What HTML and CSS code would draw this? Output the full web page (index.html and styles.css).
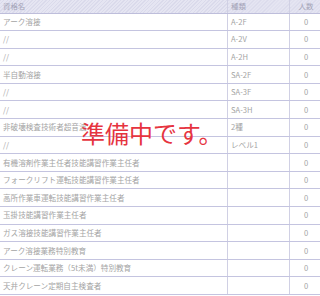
FILE: index.html
```html
<!DOCTYPE html>
<html lang="ja">
<head>
<meta charset="utf-8">
<link rel="stylesheet" href="styles.css">
</head>
<body>
<div class="page">
  <table class="tbl">
    <thead>
      <tr><th class="c-name">資格名</th><th class="c-type">種類</th><th class="c-num">人数</th></tr>
    </thead>
    <tbody>
      <tr><td class="c-name">アーク溶接</td><td class="c-type">A-2F</td><td class="c-num">0</td></tr>
      <tr><td class="c-name">//</td><td class="c-type">A-2V</td><td class="c-num">0</td></tr>
      <tr><td class="c-name">//</td><td class="c-type">A-2H</td><td class="c-num">0</td></tr>
      <tr><td class="c-name">半自動溶接</td><td class="c-type">SA-2F</td><td class="c-num">0</td></tr>
      <tr><td class="c-name">//</td><td class="c-type">SA-3F</td><td class="c-num">0</td></tr>
      <tr><td class="c-name">//</td><td class="c-type">SA-3H</td><td class="c-num">0</td></tr>
      <tr><td class="c-name">非破壊検査技術者超音波</td><td class="c-type">2種</td><td class="c-num">0</td></tr>
      <tr><td class="c-name">//</td><td class="c-type">レベル1</td><td class="c-num">0</td></tr>
      <tr><td class="c-name">有機溶剤作業主任者技能講習作業主任者</td><td class="c-type"></td><td class="c-num">0</td></tr>
      <tr><td class="c-name">フォークリフト運転技能講習作業主任者</td><td class="c-type"></td><td class="c-num">0</td></tr>
      <tr><td class="c-name">高所作業車運転技能講習作業主任者</td><td class="c-type"></td><td class="c-num">0</td></tr>
      <tr><td class="c-name">玉掛技能講習作業主任者</td><td class="c-type"></td><td class="c-num">0</td></tr>
      <tr><td class="c-name">ガス溶接技能講習作業主任者</td><td class="c-type"></td><td class="c-num">0</td></tr>
      <tr><td class="c-name">アーク溶接業務特別教育</td><td class="c-type"></td><td class="c-num">0</td></tr>
      <tr><td class="c-name">クレーン運転業務（5t未満）特別教育</td><td class="c-type"></td><td class="c-num">0</td></tr>
      <tr><td class="c-name">天井クレーン定期自主検査者</td><td class="c-type"></td><td class="c-num">0</td></tr>
    </tbody>
  </table>
  <div class="notice">準備中です。</div>
</div>
</body>
</html>
```
FILE: styles.css
```css
html, body {
  margin: 0;
  padding: 0;
  background: #ffffff;
}
.page {
  position: relative;
  width: 320px;
  height: 296px;
  overflow: hidden;
  font-family: "Noto Sans CJK JP", "Noto Sans", sans-serif;
}
.tbl {
  width: 320px;
  border-collapse: collapse;
  table-layout: fixed;
}
.tbl th, .tbl td {
  padding: 0 0 0 3px;
  font-weight: normal;
  color: #a4a4a4;
  white-space: nowrap;
  overflow: hidden;
  text-align: left;
  vertical-align: middle;
}
.tbl th {
  height: 12.5px;
  font-size: 7.4px;
  color: #a4a4b8;
  line-height: 12px;
  background: repeating-linear-gradient(135deg, #dadaeb 0, #dadaeb 1px, #e5e5f2 1px, #e5e5f2 2.5px);
  border-bottom: 1px solid #bebedb;
}
.tbl td {
  height: 16.6px;
  font-size: 7.6px;
  line-height: 12px;
  border-bottom: 1px solid #c4c4e0;
}
.tbl .c-name { width: 224px; }
.tbl .c-type {
  width: 58px;
  border-left: 1px solid #d0d0e4;
}
.tbl .c-num {
  width: 32px;
  padding: 0;
  text-align: center;
  border-left: 1px solid #d0d0e4;
}
.notice {
  position: absolute;
  left: 81px;
  top: 118px;
  font-size: 24px;
  line-height: 30px;
  color: #e6343f;
  white-space: nowrap;
}
```
